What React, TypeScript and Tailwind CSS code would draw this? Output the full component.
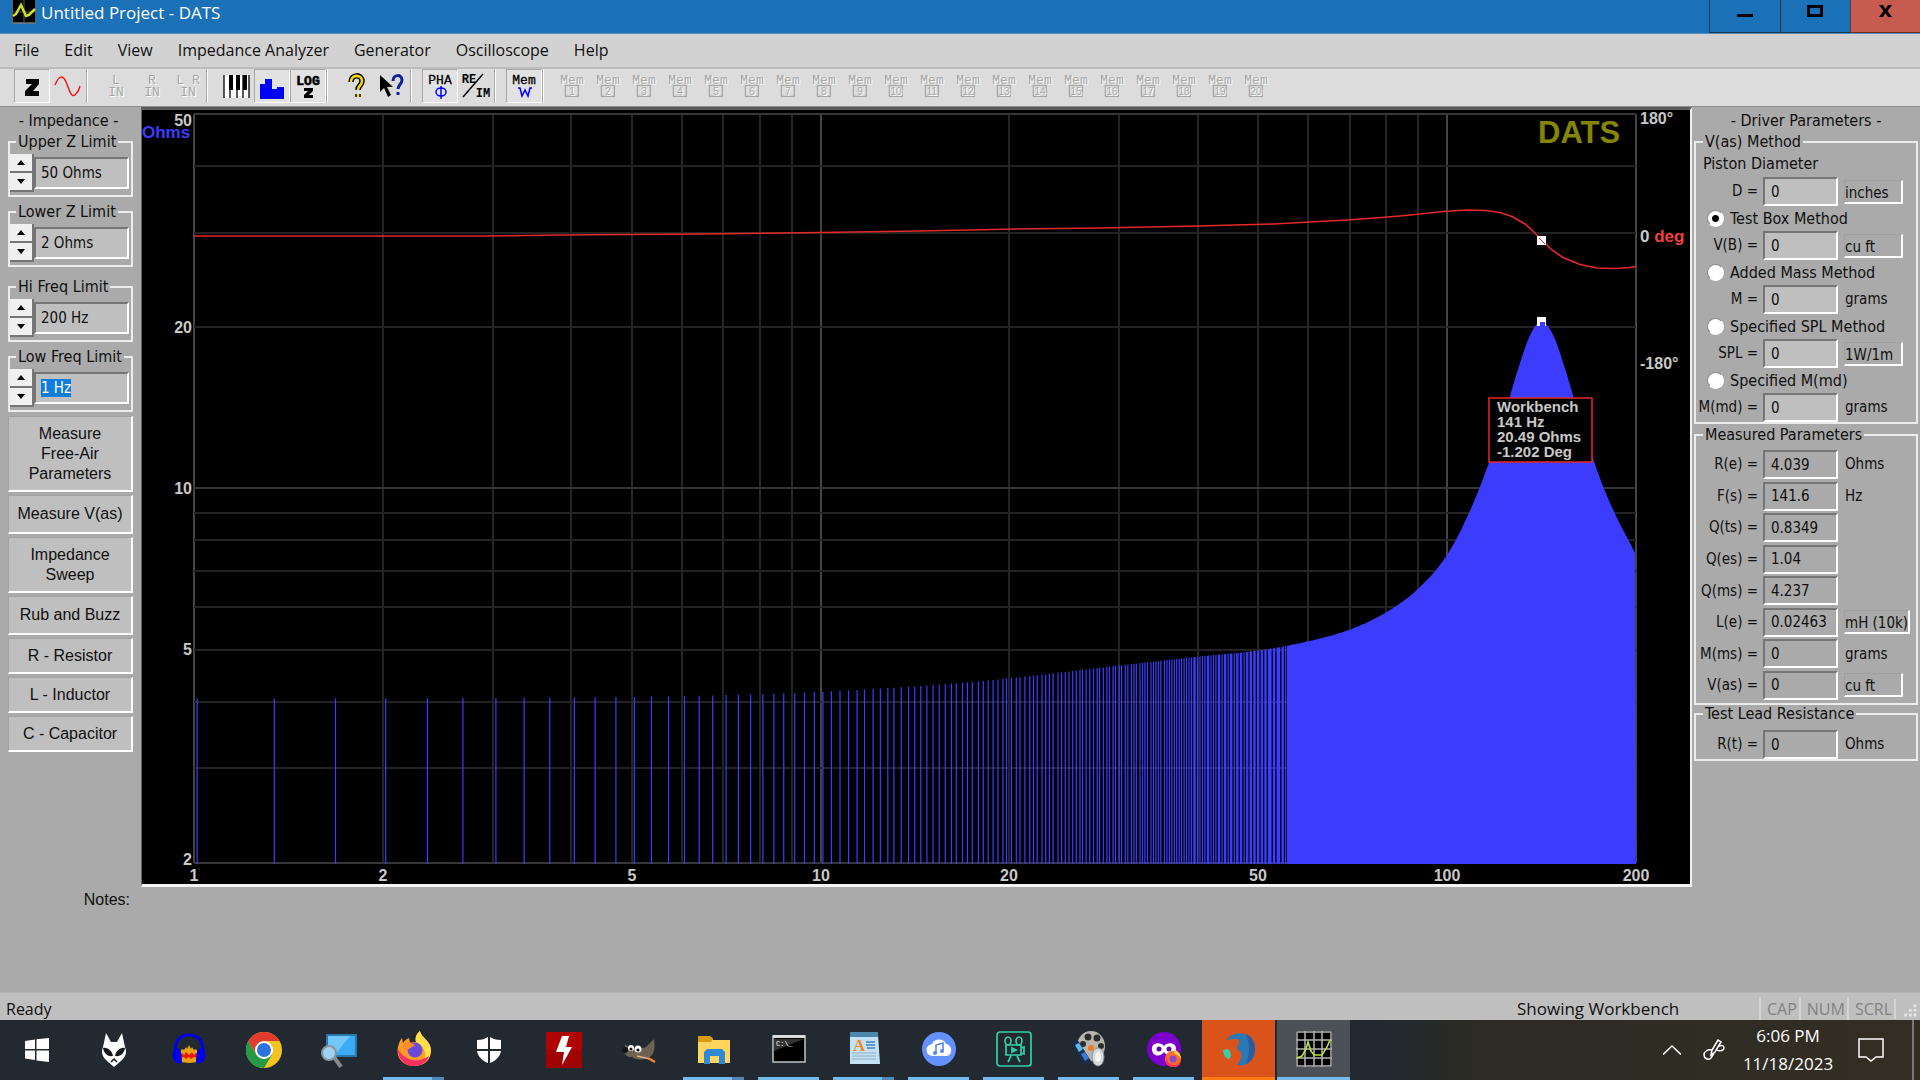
import React, { useEffect, useRef } from 'react';

const menus = ['File', 'Edit', 'View', 'Impedance Analyzer', 'Generator', 'Oscilloscope', 'Help'];

/* ---------- chart data ---------- */

const LEFT = 194;
const RIGHT = 1636;
const TOP = 114;
const BOTTOM = 863;
const DECADE_X = 626.5;
const DECADE_Y = 535.6;
const STEP = 44100 / 131072;
const SOLID_FROM = 55.5;

const xOf = (hz: number) => LEFT + DECADE_X * Math.log10(hz);
const yOf = (ohms: number) => TOP + DECADE_Y * Math.log10(50 / ohms);

// impedance magnitude, [Hz, Ohms]
const sweep: [number, number][] = [
  [1, 4.05], [3, 4.06], [5, 4.08], [7, 4.11], [10, 4.17], [15, 4.29], [20, 4.42], [30, 4.67], [40, 4.85],
  [50, 4.98], [60, 5.18], [70, 5.45], [80, 5.87], [90, 6.5], [100, 7.51], [110, 9.35], [120, 12.3], [130, 16.76],
  [136, 19.44], [141.6, 20.49], [148, 19.24], [155, 16.44], [165, 12.89], [180, 9.68], [200, 7.53],
];

const knots = sweep.map(([hz, ohms]) => [xOf(hz), yOf(ohms)]);
const slopes = knots.map((_, i) => {
  const a = knots[Math.max(0, i - 1)];
  const b = knots[Math.min(knots.length - 1, i + 1)];
  return (b[1] - a[1]) / (b[0] - a[0]);
});

const curveAt = (x: number) => {
  let i = 0;
  while (i < knots.length - 2 && knots[i + 1][0] < x) i++;
  const h = knots[i + 1][0] - knots[i][0];
  const t = Math.min(1, Math.max(0, (x - knots[i][0]) / h));
  const t2 = t * t;
  const t3 = t2 * t;
  return (
    (2 * t3 - 3 * t2 + 1) * knots[i][1] +
    (t3 - 2 * t2 + t) * h * slopes[i] +
    (3 * t2 - 2 * t3) * knots[i + 1][1] +
    (t3 - t2) * h * slopes[i + 1]
  );
};

const bars: string[] = [];
for (let k = 3; k * STEP < SOLID_FROM; k++) {
  const x = Math.round(xOf(k * STEP) / 1.2245) * 1.2245;
  bars.push(`M${x.toFixed(1)} ${curveAt(x).toFixed(1)}V864`);
}

let solid = `M${xOf(SOLID_FROM).toFixed(0)} 864`;
for (let x = Math.round(xOf(SOLID_FROM)); x <= RIGHT; x += 2) solid += `L${x} ${curveAt(x).toFixed(1)}`;
solid += `L${RIGHT} 864Z`;

const phase =
  '194,236 490,236 560,235 700,234 820,232.5 920,231 1016,229 1100,228 1198,226 1274,224 1310,222 1347,220 1375,218 1400,216 1420,214 1443,211.5 1466,210 1486,210.5 1500,212.5 1512,216.5 1525,224 1534,232 1542,240.5 1552,250 1563,257.5 1580,264.5 1597,268 1615,268.5 1630,267.5 1636,266.5';

const gridX = [1, 2, 3, 4, 5, 6, 7, 8, 9, 10, 20, 30, 40, 50, 60, 70, 80, 90, 100, 200];
const gridY = [50, 40, 30, 20, 10, 9, 8, 7, 6, 5, 4, 3, 2];
const labelsX = [1, 2, 5, 10, 20, 50, 100, 200];
const labelsY: [number, number][] = [[50, 126], [20, 333], [10, 494], [5, 655], [2, 865]];

const Chart = () => (
  <svg viewBox="142 110 1548 774" className="block w-full bg-black font-['Liberation_Sans',Arial,sans-serif] text-[16px] font-bold" fill="#c8c8c8">
    {gridX.map((v) => (
      <path key={v} d={`M${Math.round(xOf(v))} ${TOP}V${BOTTOM}`} stroke={[1, 10, 100, 200].includes(v) ? '#444' : '#252525'} strokeWidth="2" />
    ))}
    {gridY.map((v) => (
      <path key={v} d={`M${LEFT} ${Math.round(yOf(v))}H${RIGHT}`} stroke={[50, 10, 2].includes(v) ? '#363636' : '#232323'} strokeWidth="2" />
    ))}
    <path d={bars.join('')} stroke="#3c3cff" strokeWidth="1.2" />
    <path d={solid} fill="#3c3cff" />
    <polyline points={phase} fill="none" stroke="#e62828" strokeWidth="1.6" />
    <path d="M1537 236h9v9h-9zM1537 317h9v9h-9z" fill="#fff" />
    <path d="M1539 238l6 6" stroke="#e62828" />
    <path d="M1540 322h5v5h-5z" fill="#3c3cff" />

    {labelsY.map(([v, y]) => (
      <text key={v} x="192" y={y} textAnchor="end">{v}</text>
    ))}
    {labelsX.map((v) => (
      <text key={v} x={Math.round(xOf(v))} y="881" textAnchor="middle">{v}</text>
    ))}
    <text x="142" y="138" fontSize="17" fill="#3c3cff">Ohms</text>
    <text x="1538" y="143" fill="#858500" fontSize="31">DATS</text>
    <text x="1640" y="124">180°</text>
    <text x="1640" y="242" fontSize="17">0 <tspan fill="#f04040">deg</tspan></text>
    <text x="1640" y="369">-180°</text>

    <rect x="1489" y="398" width="103" height="64" fill="#000" stroke="#e62828" strokeWidth="1.5" />
    <g fontSize="15">
      <text x="1497" y="412">Workbench</text>
      <text x="1497" y="427">141 Hz</text>
      <text x="1497" y="442">20.49 Ohms</text>
      <text x="1497" y="457">-1.202 Deg</text>
    </g>
  </svg>
);

/* ---------- toolbar ---------- */

const Tool = ({ label, pressed, children }: { label: string; pressed?: boolean; children: React.ReactNode }) => (
  <button
    aria-label={label}
    className={
      pressed
        ? 'w-9 h-[34px] shrink-0 flex items-center justify-center bg-[#e2e2e2] border border-t-[#a8a8a8] border-l-[#a8a8a8] border-b-white border-r-white'
        : 'w-9 h-[34px] shrink-0 flex items-center justify-center'
    }
  >
    <svg width="34" height="32" viewBox="0 0 34 32" className="font-['Liberation_Mono','Courier_New',monospace] font-bold" textAnchor="middle" fill="#000">
      {children}
    </svg>
  </button>
);

const Separator = () => (
  <div className="w-3 h-[34px] shrink-0 flex">
    <div className="w-[2px] bg-[#aaaaaa] border-r border-white" />
  </div>
);

const InputIcon = ({ top }: { top: string }) => (
  <g fontSize="13" fontWeight="400" fill="#a6a6a6" className="[text-shadow:1px_1px_0_#fff]">
    <text x="17" y="14" xmlSpace="preserve">{top}</text>
    <text x="17" y="26">IN</text>
  </g>
);

const MemIcon = ({ n }: { n: number }) => (
  <g fill="#a6a6a6" fontWeight="400" className="[text-shadow:1px_1px_0_#fff]">
    <text x="17" y="14" fontSize="13">Mem</text>
    <rect x="11" y="16" width="13" height="11" fill="none" stroke="#fff" />
    <rect x="10.500" y="15.500" width="13" height="11" fill="none" stroke="#a6a6a6" strokeWidth="1.500" />
    <text x="17" y="25" fontSize="10" className="font-['Liberation_Sans',Arial,sans-serif]">{n}</text>
  </g>
);

const Toolbar = () => (
  <div className="h-[39px] flex items-start pl-[14px] bg-[#dcdcdc] border-t-2 border-[#bdbdbd] overflow-hidden">
    <Tool label="Impedance" pressed>
      <path d="M11 9h13v5l-6 7h6v5H10v-5l7-7h-6z" />
    </Tool>
    <Tool label="Oscilloscope">
      <path d="M4 15C8 5 12 5 15 12s5 16 9 13 4-6 5-9" fill="none" stroke="#f01818" strokeWidth="1.500" />
    </Tool>
    <Separator />
    <Tool label="Left input"><InputIcon top="L" /></Tool>
    <Tool label="Right input"><InputIcon top="R" /></Tool>
    <Tool label="Both inputs"><InputIcon top="L R" /></Tool>
    <Separator />
    <Tool label="Keyboard">
      <path d="M5 5h25v23H5z" fill="#fff" />
      <path d="M5 5v23M11 5v23M18 5v23M24 5v23M30 5v23" stroke="#000" strokeWidth="1.300" />
      <path d="M10 5h4v15h-4zM17 5h4v15h-4zM24 5h4v15h-4z" />
    </Tool>
    <Tool label="Bar display" pressed>
      <path d="M5 14h5V9h7v10h5v-2h7v12H5z" fill="#0000ff" />
    </Tool>
    <Tool label="Log scale" pressed>
      <text x="17" y="15" fontSize="13" stroke="#000" strokeWidth=".6">LOG</text>
      <path d="M13 18h9v3l-4 4h4v3h-9v-3l4-4h-4z" />
    </Tool>
    <Separator />
    <Tool label="Help topics">
      <path d="M12 12c0-8 11-8 11-1 0 5-4 4-4 9m0 4v3" fill="none" stroke="#000" strokeWidth="5.500" />
      <path d="M12 12c0-8 11-8 11-1 0 5-4 4-4 9m0 4v3" fill="none" stroke="#f5dc00" strokeWidth="2.600" />
    </Tool>
    <Tool label="Context help">
      <path d="M5 5v17l4-4 4 9 3-2-4-8h6z" />
      <path d="M18 11c0-7 9-7 9-1 0 4-4 5-4 9m0 3v3" fill="none" stroke="#10209a" strokeWidth="3" />
    </Tool>
    <Separator />
    <Tool label="Phase" pressed>
      <text x="17" y="14" fontSize="13" fontWeight="400" stroke="#000" strokeWidth=".3">PHA</text>
      <ellipse cx="18" cy="22" rx="5" ry="4" fill="none" stroke="#0000ff" strokeWidth="1.500" />
      <path d="M18 16v13" stroke="#0000ff" strokeWidth="1.500" />
    </Tool>
    <Tool label="Real and imaginary">
      <text x="10" y="13" fontSize="12">RE</text>
      <text x="24" y="27" fontSize="12">IM</text>
      <path d="M24 4L4 27" stroke="#000" strokeWidth="1.500" />
    </Tool>
    <Separator />
    <Tool label="Workbench memory" pressed>
      <text x="17" y="14" fontSize="13" fontWeight="400" stroke="#000" strokeWidth=".3">Mem</text>
      <path d="M11 18h2l2 8 3-6 3 6 2-8h2" fill="none" stroke="#0000ff" strokeWidth="1.500" />
    </Tool>
    <Separator />
    {Array.from({ length: 20 }, (_, i) => (
      <Tool key={i} label={`Memory ${i + 1}`}><MemIcon n={i + 1} /></Tool>
    ))}
  </div>
);

/* ---------- left panel ---------- */

const LimitBox = ({ title, value, selected }: { title: string; value: string; selected?: boolean }) => {
  const ref = useRef<HTMLInputElement>(null);
  useEffect(() => {
    if (selected && ref.current) {
      ref.current.focus();
      ref.current.select();
    }
  }, [selected]);
  return (
    <fieldset className="h-16 min-w-0 border-2 border-[#ececec]">
      <legend className="ml-[6px] px-[2px] h-[18px] leading-[18px] text-[16px] whitespace-nowrap">{title}</legend>
      <div className="flex items-center h-11">
        <div className="flex flex-col">
          {['up', 'down'].map((dir) => (
            <button key={dir} aria-label={`${title} ${dir}`} className="w-6 h-[19px] flex items-center justify-center bg-[#f0f0f0] border-r-2 border-b-2 border-[#757575]">
              <svg width="8" height="5" viewBox="0 0 8 5"><path d={dir === 'up' ? 'M0 5L4 0l4 5z' : 'M0 0l4 5 4-5z'} /></svg>
            </button>
          ))}
        </div>
        <input
          ref={ref}
          aria-label={title}
          defaultValue={value}
          className="flex-1 min-w-0 mr-[2px] h-8 pl-[5px] bg-[#bfbfbf] border-2 border-t-[#757575] border-l-[#757575] border-b-white border-r-white outline-none selection:bg-[#0f7ddc] selection:text-white"
        />
      </div>
    </fieldset>
  );
};

const ActionButton = ({ size, children }: { size: string; children: React.ReactNode }) => (
  <button className={`${size} w-full flex items-center justify-center text-center text-[16px] leading-5 bg-[#bfbfbf] border border-b-2 border-r-2 border-t-[#a2a2a2] border-l-[#a2a2a2] border-b-white border-r-white font-['Liberation_Sans',Arial,sans-serif]`}>
    {children}
  </button>
);

const LeftPanel = () => (
  <aside className="w-[141px] shrink-0 pl-2 pr-2 pt-[2px]">
    <h2 className="h-6 pr-1 leading-6 text-[16px] text-center">- Impedance -</h2>
    <div className="flex flex-col gap-[11px]">
      <div className="flex flex-col gap-[6px]">
        <LimitBox title="Upper Z Limit" value="50 Ohms" />
        <LimitBox title="Lower Z Limit" value="2 Ohms" />
      </div>
      <div className="flex flex-col gap-[6px]">
        <LimitBox title="Hi Freq Limit" value="200 Hz" />
        <LimitBox title="Low Freq Limit" value="1 Hz" selected />
      </div>
    </div>
    <div className="flex flex-col gap-[3px] mt-1">
      <ActionButton size="h-[76px]">Measure<br />Free-Air<br />Parameters</ActionButton>
      <ActionButton size="h-[39px]">Measure V(as)</ActionButton>
      <ActionButton size="h-14">Impedance<br />Sweep</ActionButton>
      <ActionButton size="h-[39px]">Rub and Buzz</ActionButton>
      <ActionButton size="h-9">R - Resistor</ActionButton>
      <ActionButton size="h-9">L - Inductor</ActionButton>
      <ActionButton size="h-9">C - Capacitor</ActionButton>
    </div>
  </aside>
);

/* ---------- right panel ---------- */

type FieldProps = { name: string; value: string; unit?: string; boxed?: boolean; filled?: boolean };

const Field = ({ name, value, unit, boxed, filled }: FieldProps) => (
  <label className="h-[29px] flex items-center whitespace-nowrap">
    <span className="w-[62px] shrink-0 flex justify-end">{name} =</span>
    <input
      defaultValue={value}
      className={`${filled ? 'bg-[#bfbfbf]' : 'bg-[#aaaaaa]'} ml-[5px] w-[75px] h-[29px] shrink-0 pl-[6px] border-2 border-t-[#757575] border-l-[#757575] border-b-white border-r-white outline-none`}
    />
    {unit && (
      <span className={boxed ? 'ml-[6px] h-6 min-w-[59px] leading-6 border border-b-2 border-r-2 border-t-[#a0a0a0] border-l-[#a0a0a0] border-b-white border-r-white' : 'ml-[7px]'}>{unit}</span>
    )}
  </label>
);

const Method = ({ title, checked }: { title: string; checked?: boolean }) => (
  <label className="h-[25px] pl-[11px] flex items-center gap-[6px] text-[16px] whitespace-nowrap">
    <input
      type="radio"
      name="method"
      defaultChecked={checked}
      className="appearance-none size-[17px] rounded-full bg-white border border-[#8a8a8a] border-b-white border-r-white checked:bg-[radial-gradient(#000_3px,#fff_4px)]"
    />
    {title}
  </label>
);

const Group = ({ title, children }: { title: string; children: React.ReactNode }) => (
  <fieldset className="min-w-0 border-2 border-[#ececec]">
    <legend className="ml-[7px] px-[2px] h-[18px] leading-[18px] text-[16px]">{title}</legend>
    {children}
  </fieldset>
);

const RightPanel = () => (
  <aside className="w-[228px] shrink-0 pl-[2px] pr-[2px] pt-[2px]">
    <h2 className="h-6 leading-6 text-[16px] text-center">- Driver Parameters -</h2>
    <Group title="V(as) Method">
      <p className="h-[26px] pl-[7px] leading-[26px] text-[16px]">Piston Diameter</p>
      <Field name="D" value="0" unit="inches" boxed filled />
      <Method title="Test Box Method" checked />
      <Field name="V(B)" value="0" unit="cu ft" boxed filled />
      <Method title="Added Mass Method" />
      <Field name="M" value="0" unit="grams" filled />
      <Method title="Specified SPL Method" />
      <Field name="SPL" value="0" unit="1W/1m" boxed filled />
      <Method title="Specified M(md)" />
      <Field name="M(md)" value="0" unit="grams" filled />
    </Group>
    <div className="mt-[2px]">
      <Group title="Measured Parameters">
        <div className="flex flex-col justify-between h-[259px] pt-[6px] pb-[3px]">
          <Field name="R(e)" value="4.039" unit="Ohms" />
          <Field name="F(s)" value="141.6" unit="Hz" />
          <Field name="Q(ts)" value="0.8349" />
          <Field name="Q(es)" value="1.04" />
          <Field name="Q(ms)" value="4.237" />
          <Field name="L(e)" value="0.02463" unit="mH (10k)" boxed />
          <Field name="M(ms)" value="0" unit="grams" />
          <Field name="V(as)" value="0" unit="cu ft" boxed />
        </div>
      </Group>
    </div>
    <Group title="Test Lead Resistance">
      <div className="pt-[7px]">
        <Field name="R(t)" value="0" unit="Ohms" />
      </div>
    </Group>
  </aside>
);

/* ---------- taskbar ---------- */

const apps: { name: string; state?: 'open' | 'multi'; tile?: string; icon: React.ReactNode }[] = [
  { name: 'Start', icon: <path d="M4 9l10-1.500V17H4zM15.500 7.300L28 6v11H15.500zM4 18.500h10V28L4 26.500zM15.500 18.500H28V30l-12.500-1.500z" fill="#fff" /> },
  {
    name: 'Foobar2000',
    icon: (
      <>
        <path d="M10 1l5 9h6l5-9 3 14c2 5 1 9-3 13l-8 7-8-7c-4-4-5-8-3-13z" fill="#fff" />
        <path d="M7 16c5-1 9 3 10 8-6 1-9-3-10-8zM29 16c-5-1-9 3-10 8 6 1 9-3 10-8z" fill="#15181c" />
        <path d="M15 30l3-3 3 3" fill="none" stroke="#15181c" strokeWidth="1.500" />
      </>
    ),
  },
  {
    name: 'Audacity',
    icon: (
      <>
        <path d="M5 25C2 10 8 3 18 3s16 7 13 22" fill="none" stroke="#0000e8" strokeWidth="3" />
        <path d="M9 30V20l2-3 2 1 2-3 1 2 2-4 2 4 1-2 2 3 2-1 2 3v10l-9 1z" fill="#e8a410" />
        <path d="M9 23l2-2 2 2 2-3 3 3 3-3 2 3 2-2 2 2v3l-4-1-3 2-2-2-3 2-2-2-4 1z" fill="#e8180c" />
        <path d="M3 17c5-3 8 0 8 14-7 2-12-5-8-14zM33 17c-5-3-8 0-8 14 7 2 12-5 8-14z" fill="#0000e8" />
      </>
    ),
  },
  {
    name: 'Chrome',
    icon: (
      <>
        <circle cx="18" cy="18" r="18" fill="#f5c31d" />
        <path d="M2.400 9A18 18 0 0133.600 9H18L10 22z" fill="#e33b2e" />
        <path d="M2.400 9A18 18 0 0018 36l8-13.500-15.500.5z" fill="#249a46" />
        <circle cx="18" cy="18" r="9" fill="#fff" />
        <circle cx="18" cy="18" r="7" fill="#2b73e0" />
      </>
    ),
  },
  {
    name: 'Magnifier',
    icon: (
      <>
        <path d="M5 2h31v23H5z" fill="#2a79ac" />
        <path d="M7 4h27v19H7z" fill="#3cabf4" />
        <path d="M7 4h22L14 23H7z" fill="#72c6fa" />
        <path d="M13 25l7 10" stroke="#85898d" strokeWidth="4" />
        <circle cx="8" cy="21" r="7" fill="#9dd3ef" stroke="#88959d" strokeWidth="2" />
      </>
    ),
  },
  {
    name: 'Firefox',
    state: 'multi',
    icon: (
      <>
        <path d="M18 35C6 35 0 26 2 16c1-4 2-7 4-9l1 5c2-3 4-4 6-5l1 5c2-1 4-1 6-1-1-4 0-8 4-11 1 7 11 9 11 20 0 9-7 15-17 15z" fill="#ff9b26" />
        <path d="M24 0c1 7 11 9 11 20-1 5-3 9-7 11 3-10 0-16-8-20-1-4 0-8 4-11z" fill="#ffe04a" />
        <path d="M18 35C8 35 2 28 2 18c7 12 19 15 31 7-2 6-8 10-15 10z" fill="#fa2e66" />
        <circle cx="19" cy="19" r="7.500" fill="#6b49d8" />
        <path d="M8 12c5-2 9 0 11 3-4 0-5 3-8 4-3 0-5-3-3-7z" fill="#ff8b24" />
      </>
    ),
  },
  { name: 'Windows Security', icon: <path d="M17 5c-3 2-6 3-11 3v9h11zM19 5v12h11V8c-5 0-8-1-11-3zM6 19c1 6 6 10 11 12V19zM19 19v12c5-2 10-6 11-12z" fill="#fff" /> },
  {
    name: 'Flash',
    icon: (
      <>
        <path d="M0 0h36v36H0z" fill="#b00404" />
        <path d="M0 18h36v18H0z" fill="#960000" opacity=".6" />
        <path d="M16 4h7l-3 11h6L16 33l2-13h-8z" fill="#fff" />
      </>
    ),
  },
  {
    name: 'GIMP',
    icon: (
      <>
        <path d="M4 12l4 4c6 0 14 1 17-1l8-8c1 7 1 13-3 17-5 4-13 5-19 1-5 0-8-2-7-6z" fill="#6d6253" />
        <circle cx="4" cy="18" r="3" fill="#151515" />
        <circle cx="10" cy="16" r="3" fill="#fff" />
        <circle cx="17" cy="17" r="3.500" fill="#fff" />
        <circle cx="10" cy="17" r="1.500" />
        <circle cx="17" cy="18" r="1.500" />
        <path d="M16 24l13 3" stroke="#d8b48a" strokeWidth="1.500" />
        <path d="M27 26l7 4" stroke="#f08522" strokeWidth="2.500" />
      </>
    ),
  },
  {
    name: 'File Explorer',
    state: 'multi',
    icon: (
      <>
        <path d="M2 6h13l2 3h17v23H2z" fill="#ffd560" />
        <path d="M2 5h12l3 2-2 4H2z" fill="#dc9a10" />
        <path d="M8 33V21l3-3h15l3 3v12h-6v-8h-9v8z" fill="#2e8ad4" />
      </>
    ),
  },
  {
    name: 'Command Prompt',
    state: 'open',
    icon: (
      <>
        <path d="M2 5h32v26H2z" fill="#000" stroke="#bfc3c5" strokeWidth="1.500" />
        <path d="M2 4h32v3H2z" fill="#d9dcdd" />
        <path d="M3 8h30L3 20z" fill="#333" />
        <text x="5" y="15" fontSize="7" fill="#fff" className="font-['Liberation_Mono',monospace]">C:\_</text>
      </>
    ),
  },
  {
    name: 'WordPad',
    state: 'multi',
    icon: (
      <>
        <path d="M4 3h28l2 30H4z" fill="#c4e2f5" />
        <path d="M4 1h28v5H4z" fill="#4d87ae" />
        <path d="M6 22h24M6 25h24M6 28h24" stroke="#8daebf" />
        <path d="M20 11h9M20 14h9M21 17h8" stroke="#3f80c4" strokeWidth="1.500" />
        <text x="7" y="20" fontSize="17" fontWeight="700" fill="#f58a1c" className="font-['Liberation_Serif',serif]">A</text>
      </>
    ),
  },
  {
    name: 'Cloud Music',
    state: 'open',
    icon: (
      <>
        <circle cx="18" cy="18" r="17" fill="#6590ff" />
        <path d="M12 25a6 6 0 01-1-12c2-6 12-6 14 0 7 1 7 12 0 12z" fill="#fff" />
        <path d="M15 22v-8l7-2v8" fill="none" stroke="#5a85f4" strokeWidth="1.600" />
        <circle cx="14" cy="22" r="2" fill="#5a85f4" />
        <circle cx="21" cy="20" r="2" fill="#5a85f4" />
      </>
    ),
  },
  {
    name: 'Video Recorder',
    state: 'open',
    icon: (
      <g fill="none" stroke="#31cfab" strokeWidth="1.700">
        <rect x="1" y="1" width="34" height="34" rx="3" />
        <path d="M10 14h15v10H10zM25 17l3-1v7l-3-1zM15 25l-3 6M21 25l3 6" />
        <ellipse cx="12" cy="10" rx="3" ry="4" />
        <ellipse cx="23" cy="10" rx="3" ry="4" />
        <path d="M16 17l4 2-4 2z" fill="#31cfab" />
      </g>
    ),
  },
  {
    name: 'Movie Editor',
    state: 'open',
    icon: (
      <>
        <ellipse cx="20" cy="15" rx="14" ry="15" fill="#b8b6ae" />
        <g fill="#2a2c2e">
          <circle cx="17" cy="6" r="3.500" />
          <circle cx="26" cy="7" r="3.500" />
          <circle cx="30" cy="15" r="3" />
          <circle cx="12" cy="13" r="3" />
        </g>
        <path d="M0 12l6-4 14 22-6 4z" fill="#1b2f4c" />
        <path d="M4 14l4-2 4 6-4 3z" fill="#5db8f2" />
        <path d="M10 23l4-2 4 6-4 3z" fill="#3a7bd6" />
        <circle cx="20" cy="17" r="3" fill="#f07a20" />
        <ellipse cx="27" cy="26" rx="6" ry="9" fill="#d6d9da" stroke="#8d9294" />
        <ellipse cx="27" cy="26" rx="3" ry="5" fill="#f5f5f5" />
      </>
    ),
  },
  {
    name: 'Private Browser',
    state: 'open',
    icon: (
      <>
        <circle cx="18" cy="18" r="17" fill="#7d00cc" />
        <path d="M18 15c3-4 13-4 12 4-1 7-9 7-12 2-3 5-11 5-12-2-1-8 9-8 12-4z" fill="#fff" />
        <circle cx="13" cy="18" r="2.500" fill="#5b0a9e" />
        <circle cx="23" cy="18" r="2.500" fill="#5b0a9e" />
        <circle cx="27" cy="28" r="8" fill="#ff6a2b" />
        <path d="M20 24c0 10 10 14 15 6-1 8-12 9-15 1z" fill="#f92d69" />
        <path d="M28 18c3 2 7 4 7 10-2-4-5-4-7-6z" fill="#ffd23e" />
        <circle cx="27" cy="28" r="3.500" fill="#8b49d0" />
      </>
    ),
  },
  {
    name: 'Browser',
    tile: 'bg-[#d9531a] border-[#ff7a10]',
    icon: (
      <>
        <path d="M5 9C13-2 34 0 34 18c0 12-9 18-18 16 5-6 6-10 3-14-3-1-4-3-2-6 2-2 2-5-1-6-3 0-7 0-11 1z" fill="#2a79b4" />
        <path d="M25 3c7 3 9 9 9 15 0 9-5 13-9 15 4-10 4-20 0-30z" fill="#2b5ba3" />
        <path d="M2 19l5-1c3 3 4 7 1 10-4-1-6-5-6-9z" fill="#35cfa8" />
      </>
    ),
  },
  {
    name: 'DATS',
    tile: 'bg-[#4c5157] border-[#76b9ed]',
    icon: (
      <>
        <path d="M0 0h36v36H0z" fill="#000" />
        <path d="M1 1h34v34H1zM9 0v36M18 0v36M26 0v36M0 9h36M0 18h36M0 27h36" fill="none" stroke="#b4b4b4" strokeWidth="1.500" />
        <path d="M1 27l5-2 4-7 2-7 3 9 3 4h8l5-8 3-7" fill="none" stroke="#b9e23a" strokeWidth="1.600" />
      </>
    ),
  },
];

const Taskbar = () => (
  <footer className="h-[60px] shrink-0 flex justify-between bg-[linear-gradient(90deg,#232930_0%,#232930_72%,#2c2b24_77%,#332e24_100%)] text-white font-['Open_Sans','Segoe_UI',sans-serif]">
    <nav className="flex pl-px">
      {apps.map(({ name, state, tile, icon }) => (
        <button key={name} aria-label={name} className="w-[75px] h-[60px] px-[1px] flex">
          <span className={tile ? `${tile} flex-1 h-full flex flex-col border-b-[3px]` : 'flex-1 h-full flex flex-col'}>
            <span className="flex-1 flex items-center justify-center">
              <svg width="36" height="36" viewBox="0 0 36 36">{icon}</svg>
            </span>
            {state && (
              <span className="h-[3px] mx-[6px] flex bg-[#76b9ed]">
                {state === 'multi' && <span className="ml-auto w-3 bg-[#5288b8]" />}
              </span>
            )}
          </span>
        </button>
      ))}
    </nav>
    <div className="flex items-center">
      <button aria-label="Show hidden icons" className="w-10 flex justify-center">
        <svg width="18" height="10" viewBox="0 0 18 10" fill="none" stroke="#fff" strokeWidth="1.500"><path d="M0 9.500L9 1l9 8.500" /></svg>
      </button>
      <button aria-label="Pen" className="w-[43px] flex justify-center">
        <svg width="22" height="22" viewBox="0 0 22 22" fill="none" stroke="#fff" strokeWidth="1.500">
          <path d="M8 16l1-5 6-10 3 2-6 10-4 3zM9 11c-5-1-8 2-8 5s4 6 7 3l3-5M16 7c4-1 5 0 5 2s-4 4-7 2" />
        </svg>
      </button>
      <button aria-label="Clock" className="w-[106px] h-full flex flex-col items-center justify-center text-[17px] leading-7">
        <span>6:06 PM</span>
        <span>11/18/2023</span>
      </button>
      <button aria-label="Notifications" className="w-[59px] mr-3 h-full flex items-center justify-center">
        <svg width="26" height="26" viewBox="0 0 26 26" fill="none" stroke="#fff" strokeWidth="1.500"><path d="M1 2h24v18h-7l-5 4-5-4H1z" /></svg>
      </button>
      <button aria-label="Show desktop" className="w-2 h-full border-l-2 border-[#77757a]" />
    </div>
  </footer>
);

/* ---------- window ---------- */

const TitleBar = () => (
  <header className="h-[34px] shrink-0 flex items-start bg-[#1a71b7] border-b border-[#5a8fc0] text-white">
    <svg width="24" height="24" viewBox="0 0 24 24" className="ml-3">
      <path d="M0-2h24v25H0z" fill="#000" stroke="#7a7a7a" strokeWidth="1.500" />
      <path d="M12 0v22M0 12h24" stroke="#555" />
      <path d="M1 16l3-2 5-9 5 11 3-1 6-6" fill="none" stroke="#d2e02e" strokeWidth="2.500" />
    </svg>
    <h1 className="ml-[5px] leading-[26px] text-[17px] font-['Open_Sans','Segoe_UI',sans-serif]">Untitled Project - DATS</h1>
    <div className="ml-auto flex h-[33px] text-black">
      <button aria-label="Minimize" className="w-[71px] flex justify-center pt-[5px] border-l border-b border-[#17364f]">
        <svg width="16" height="13" viewBox="0 0 16 13"><path d="M0 9h16v3H0z" /></svg>
      </button>
      <button aria-label="Maximize" className="w-[70px] flex justify-center pt-[5px] border-l border-b border-[#17364f]">
        <svg width="18" height="13" viewBox="0 0 18 13"><path d="M1.500 1.500h13v9h-13z" fill="none" stroke="#000" strokeWidth="3" /></svg>
      </button>
      <button aria-label="Close" className="w-[70px] flex justify-center pt-[5px] bg-[#c75b50] border-l border-b border-[#6b2f2b]">
        <svg width="13" height="12" viewBox="0 0 13 12"><path d="M0 0h4l2.500 4L9 0h4L8.500 6l4.500 6H9L6.500 8 4 12H0l4.500-6z" /></svg>
      </button>
    </div>
  </header>
);

const StatusBar = () => (
  <div className="h-7 shrink-0 flex items-center bg-[#bfbfbf] border-t border-[#b4b4b4] pl-[6px] pt-1 text-[16px] font-['Open_Sans','Segoe_UI',sans-serif]">
    <span>Ready</span>
    <span className="ml-auto w-[242px] text-[17px]">Showing Workbench</span>
    {['CAP', 'NUM', 'SCRL'].map((key) => (
      <span key={key} className="h-full pl-[6px] pr-[2px] flex items-center border-l-2 border-[#d4d4d4] text-[#828282]">{key}</span>
    ))}
    <svg width="26" height="20" viewBox="0 0 26 20" className="border-l-2 border-[#d4d4d4]" fill="#e6e6e6">
      <path d="M9 15h3v3H9zM14 15h3v3h-3zM19 15h3v3h-3zM14 10h3v3h-3zM19 10h3v3h-3zM19 5h3v3h-3z" />
    </svg>
  </div>
);

export default function App() {
  return (
    <div className="min-h-screen flex flex-col bg-[#aaaaaa] text-[#101010] text-[15px] font-['DejaVu_Sans_Condensed','DejaVu_Sans',Tahoma,sans-serif]">
      <TitleBar />
      <nav className="h-[33px] shrink-0 flex items-start gap-[25px] pl-[14px] pt-1 bg-[#d2d2d2] text-[16px] font-['Open_Sans','Segoe_UI',sans-serif]">
        {menus.map((m) => (
          <button key={m}>{m}</button>
        ))}
      </nav>
      <Toolbar />
      <main className="flex-1 border-t border-[#8e8e8e]">
        <div className="flex items-start">
          <LeftPanel />
          <div className="flex-1 min-w-0 border-t-[3px] border-l border-r-2 border-b-[3px] border-t-[#5c5c5c] border-l-[#666] border-r-[#f0f0f0] border-b-[#f4f4f4]">
            <Chart />
          </div>
          <RightPanel />
        </div>
        <label htmlFor="notes" className="block w-[130px] mt-px text-right text-[16px] leading-6 font-['Liberation_Sans',Arial,sans-serif]">Notes:</label>
        <textarea id="notes" className="block h-10 w-full resize-none outline-none" />
      </main>
      <StatusBar />
      <Taskbar />
    </div>
  );
}
